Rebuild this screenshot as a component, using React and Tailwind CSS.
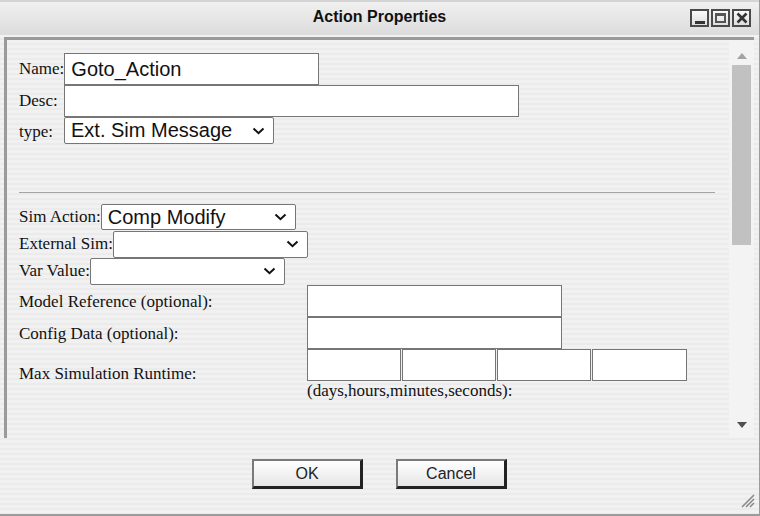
import React from "react";

const serif = "font-['Liberation_Serif','Times_New_Roman',serif]";
const sans = "font-['Liberation_Sans',Arial,sans-serif]";

function Chevron() {
	return (
		<svg width="13" height="8" viewBox="0 0 13 8" className="pointer-events-none absolute right-[9px] top-1/2 -translate-y-1/2">
			<path d="M1.5 1.5 L6.5 6.2 L11.5 1.5" fill="none" stroke="#111" strokeWidth="2" />
		</svg>
	);
}

function Select({ value, width, height = "h-[27px]" }) {
	return (
		<div className={`relative ${width} ${height} shrink-0`}>
			<div className={`h-full w-full rounded-[2px] border border-[#767676] bg-white pl-[6px] text-[20px] leading-[25px] text-[#111] ${sans}`}>
				{value}
			</div>
			<Chevron />
		</div>
	);
}

function TextBox({ value = "", width }) {
	return (
		<input
			type="text"
			defaultValue={value}
			className={`${width} h-[32px] shrink-0 border border-[#767676] bg-white px-[6px] text-[20px] text-[#111] outline-none ${sans}`}
		/>
	);
}

function WinButton({ children }) {
	return (
		<div className="flex h-[18px] w-[19px] items-center justify-center border-2 border-[#4a4a4a] bg-gradient-to-b from-[#fafafa] to-[#dedede]">
			{children}
		</div>
	);
}

function DialogButton({ label }) {
	return (
		<button
			type="button"
			className={`h-[30px] w-[111px] border-l-2 border-t-2 border-b-[3px] border-r-[3px] border-l-[#7a7a7a] border-t-[#7a7a7a] border-b-[#222] border-r-[#222] bg-gradient-to-b from-white to-[#e6e6e6] text-[16px] text-[#222] ${sans}`}
		>
			{label}
		</button>
	);
}

export default function App() {
	return (
		<div className="flex h-[516px] w-[760px] flex-col border-b-2 border-r border-[#9c9c9c] bg-[image:repeating-linear-gradient(to_bottom,#f1f1f1_0px,#f1f1f1_3px,#ebebeb_3px,#ebebeb_5px)]">
			{/* title bar */}
			<div className="relative flex h-[35px] shrink-0 items-center justify-center border-t-2 border-[#d4d4d4] bg-gradient-to-b from-[#f0f0f0] to-[#dcdcdc] pb-[4px]">
				<span className={`text-[16px] font-bold text-[#111] ${sans}`}>Action Properties</span>
				<div className="absolute right-[8px] top-[7px] flex gap-[2px]">
					<WinButton>
						<div className="mt-[8px] h-[3px] w-[10px] bg-[#333]" />
					</WinButton>
					<WinButton>
						<div className="h-[10px] w-[11px] border-2 border-t-[3px] border-[#555]" />
					</WinButton>
					<WinButton>
						<svg width="12" height="12" viewBox="0 0 12 12">
							<path d="M1.5 1.5 L10.5 10.5 M10.5 1.5 L1.5 10.5" stroke="#333" strokeWidth="2.6" />
						</svg>
					</WinButton>
				</div>
			</div>

			{/* panel */}
			<div className="ml-[4px] mr-[5px] mt-[2px] flex h-[401px] shrink-0 border-l-[3px] border-t-[3px] border-[#9a9a9a]">
				<div className={`flex-1 pl-[12px] pr-[14px] pt-[13px] text-[17px] text-[#111] ${serif}`}>
					<div className="flex items-center">
						<span>Name:</span>
						<TextBox value="Goto_Action" width="w-[255px]" />
					</div>
					<div className="flex items-center">
						<span className="w-[45px]">Desc:</span>
						<TextBox width="w-[455px]" />
					</div>
					<div className="flex items-center">
						<span className="w-[45px] pt-[2px]">type:</span>
						<Select value="Ext. Sim Message" width="w-[210px]" />
					</div>

					<div className="mt-[47px] h-px bg-[#a3a3a3]" />

					<div className="mt-[11px] flex flex-col">
						<div className="mb-[1px] flex h-[26px] items-center">
							<span>Sim Action:</span>
							<Select value="Comp Modify" width="w-[195px]" height="h-[26px]" />
						</div>
						<div className="flex h-[27px] items-center">
							<span>External Sim:</span>
							<Select value="" width="w-[195px]" />
						</div>
						<div className="flex h-[27px] items-center">
							<span>Var Value:</span>
							<Select value="" width="w-[195px]" />
						</div>
					</div>

					<div className="flex items-center">
						<span className="w-[288px] pt-[2px]">Model Reference (optional):</span>
						<TextBox width="w-[255px]" />
					</div>
					<div className="flex items-center">
						<span className="w-[288px] pt-[2px]">Config Data (optional):</span>
						<TextBox width="w-[255px]" />
					</div>
					<div className="flex items-start">
						<span className="w-[288px] pt-[18px] leading-[14px]">Max Simulation Runtime:</span>
						<div className="flex gap-px">
							<TextBox width="w-[94px]" />
							<TextBox width="w-[94px]" />
							<TextBox width="w-[94px]" />
							<TextBox width="w-[95px]" />
						</div>
					</div>
					<div className="pl-[288px] leading-[20px]">(days,hours,minutes,seconds):</div>
				</div>

				{/* scrollbar */}
				<div className="flex w-[25px] shrink-0 flex-col items-center bg-[#f3f3f3] pb-[10px] pt-[13px]">
					<svg width="10" height="6" viewBox="0 0 10 6">
						<path d="M0 6 L5 0 L10 6 Z" fill="#a3a3a3" />
					</svg>
					<div className="mt-[6px] h-[180px] w-[19px] bg-[#c1c1c1]" />
					<div className="flex-1" />
					<svg width="10" height="6" viewBox="0 0 10 6">
						<path d="M0 0 L10 0 L5 6 Z" fill="#505050" />
					</svg>
				</div>
			</div>

			{/* buttons */}
			<div className="relative flex flex-1 items-start justify-center gap-[33px] pt-[21px]">
				<DialogButton label="OK" />
				<DialogButton label="Cancel" />
				<svg width="16" height="16" viewBox="0 0 16 16" className="absolute bottom-[6px] right-[4px]">
					<path d="M15 3 L3 15 M15 7 L7 15 M15 11 L11 15" stroke="#8a8a8a" strokeWidth="1.6" />
				</svg>
			</div>
		</div>
	);
}
